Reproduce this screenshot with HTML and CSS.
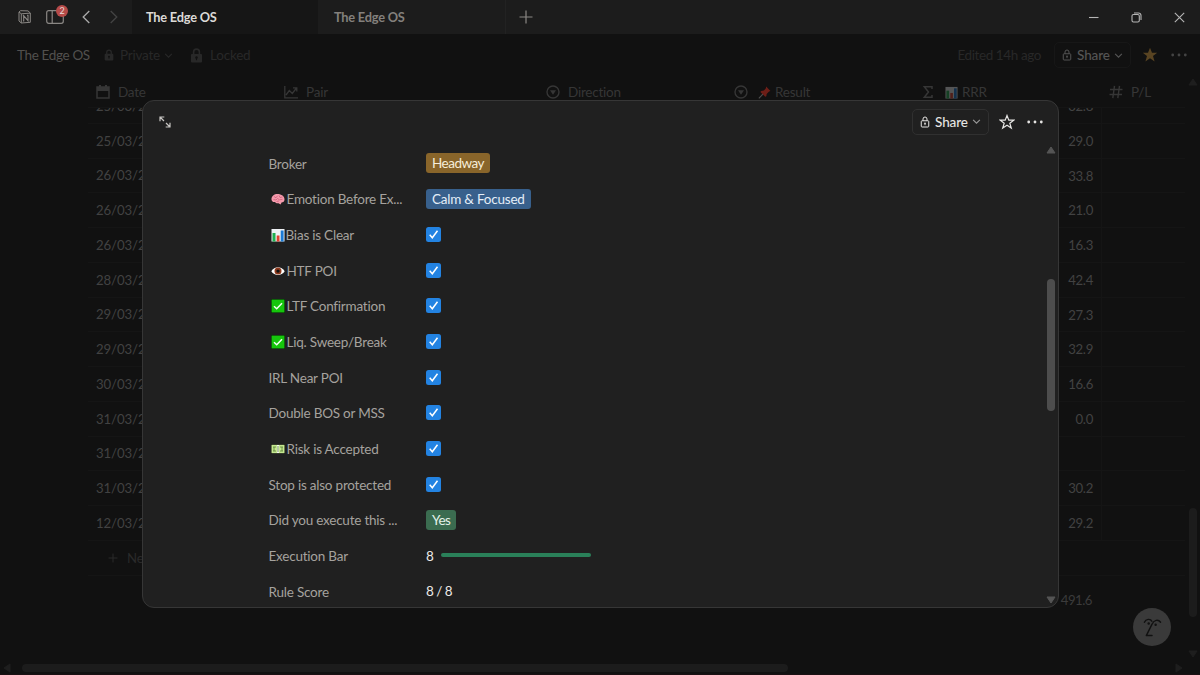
FILE: index.html
```
<!DOCTYPE html>
<html lang="en">

<head>
    <meta charset="UTF-8">
    <meta name="viewport" content="width=device-width, initial-scale=1.0">
    <title>The Edge OS</title>
    <link rel="stylesheet" href="styles.css">
</head>

<body>
    <!-- shared icons -->
    <svg class="defs" width="0" height="0">
        <symbol id="lock" viewBox="0 0 12 14">
            <rect x="1.5" y="5.5" width="9" height="7.5" rx="1" fill="none" stroke="currentColor" stroke-width="1.2" />
            <path d="M3.6 5.5V3.4a2.4 2.4 0 0 1 4.8 0v2.1M6 8.2v2.6" fill="none" stroke="currentColor" stroke-width="1.2" />
            <circle cx="6" cy="8.5" r="1" fill="currentColor" />
        </symbol>
        <symbol id="lock-fill" viewBox="0 0 12 14">
            <path fill="currentColor" fill-rule="evenodd" d="M1.8 5.6H10.2a1 1 0 0 1 1 1V12.5a1 1 0 0 1-1 1H1.8a1 1 0 0 1-1-1V6.6a1 1 0 0 1 1-1zM6 7.8a1.2 1.2 0 0 0-.5 2.3v1.3h1v-1.3A1.2 1.2 0 0 0 6 7.8z" />
            <path d="M3.3 6V3.7a2.7 2.7 0 0 1 5.4 0V6" fill="none" stroke="currentColor" stroke-width="1.5" />
        </symbol>
        <symbol id="down" viewBox="0 0 8 8">
            <path d="M1 2.5l3 3 3-3" fill="none" stroke="currentColor" />
        </symbol>
        <symbol id="dots" viewBox="0 0 16 4">
            <circle cx="1.7" cy="2" r="1.4" fill="currentColor" />
            <circle cx="8" cy="2" r="1.4" fill="currentColor" />
            <circle cx="14.3" cy="2" r="1.4" fill="currentColor" />
        </symbol>
        <symbol id="select" viewBox="0 0 14 14">
            <circle cx="7" cy="7" r="6" fill="none" stroke="currentColor" stroke-width="1.4" />
            <path d="M4 5.3h6L7 9.7z" fill="currentColor" />
        </symbol>
        <symbol id="chart" viewBox="0 0 14 14">
            <rect x=".5" y="1" width="13" height="12.5" fill="#eef1f4" />
            <rect x="1.5" y="5" width="3" height="8.5" fill="#1fae50" />
            <rect x="5.7" y="7.5" width="2.8" height="6" fill="#e0402f" />
            <rect x="9.7" y="2.5" width="2.9" height="11" fill="#1c7bd6" />
        </symbol>
        <symbol id="green-check" viewBox="0 0 14 14">
            <rect width="14" height="14" fill="#0b250b" />
            <rect x=".6" y=".6" width="12.8" height="12.8" fill="#16c60c" />
            <path d="M3 7.3l2.7 2.5L11 4.3" fill="none" stroke="#f4fff4" stroke-width="1.5" />
        </symbol>
        <symbol id="checked" viewBox="0 0 15 15">
            <rect width="15" height="15" rx="2.5" fill="#2383e2" />
            <path d="M3.7 7.8l2.6 2.9 5.2-7" fill="none" stroke="#fff" stroke-width="1.5" />
        </symbol>
        <symbol id="arrow" viewBox="0 0 10 8">
            <path d="M5 1L9 7H1z" fill="currentColor" stroke="currentColor" stroke-linejoin="round" />
        </symbol>
    </svg>

    <div class="app">
        <div class="titlebar">
            <div class="nav">
                <svg class="notion" viewBox="0 0 13 14">
                    <path d="M1 2l1.5-1.3 7.5.2L12.3 3v9.3l-9 .7L1 11zM1 2l2.3 1.8 9-.7M3.3 3.8v9.2" fill="none" stroke="currentColor" />
                    <path d="M5.7 11V5.7L10 10.7V5.2M4.8 5.7h1.4M9 5.2h1.5M4.9 11h1.3" fill="none" stroke="currentColor" stroke-width="1.1" />
                </svg>
                <div class="side">
                    <svg viewBox="0 0 18 14">
                        <rect x=".7" y=".7" width="16.6" height="12.6" rx="2" fill="none" stroke="currentColor" stroke-width="1.2" />
                        <path d="M6.2 1v12" stroke="currentColor" stroke-width="1.2" />
                    </svg>
                    <span class="badge">2</span>
                </div>
                <svg class="chev" viewBox="0 0 8 14"><path d="M7.3 1L1.2 7l6.1 6" fill="none" stroke="currentColor" stroke-width="1.3" /></svg>
                <svg class="chev dim" viewBox="0 0 8 14"><path d="M.7 1l6.1 6-6.1 6" fill="none" stroke="currentColor" stroke-width="1.3" /></svg>
            </div>
            <div class="tab active">The Edge OS</div>
            <div class="tab">The Edge OS</div>
            <svg class="plus" viewBox="0 0 14 14"><path d="M7 .5v13M.5 7h13" stroke="currentColor" stroke-width="1.2" /></svg>
            <div class="win">
                <svg viewBox="0 0 11 11"><path d="M1 5.5h9.5" stroke="currentColor" stroke-width="1.1" /></svg>
                <svg viewBox="0 0 11 11">
                    <rect x="1" y="2.5" width="7.3" height="7.5" rx="1.5" fill="none" stroke="currentColor" stroke-width="1.1" />
                    <path d="M3 1h4.5A2.5 2.5 0 0 1 10 3.5V8" fill="none" stroke="currentColor" stroke-width="1.1" />
                </svg>
                <svg viewBox="0 0 11 11"><path d="M.8.8l9.4 9.4M10.2.8L.8 10.2" stroke="currentColor" stroke-width="1.1" /></svg>
            </div>
        </div>

        <div class="topbar">
            <span class="crumb">The Edge OS</span>
            <svg class="i-lock"><use href="#lock-fill" /></svg>
            <span class="private">Private</span>
            <svg class="i-down"><use href="#down" /></svg>
            <svg class="i-lock big"><use href="#lock-fill" /></svg>
            <span class="locked">Locked</span>
            <span class="edited">Edited 14h ago</span>
            <div class="share">
                <svg class="i-lock"><use href="#lock" /></svg>
                <span>Share</span>
                <svg class="i-down"><use href="#down" /></svg>
            </div>
            <svg class="star gold" viewBox="0 0 16 16"><path d="M8 .8l2 5h5.2l-4.2 3.3 1.6 5.3L8 11.3l-4.6 3.1L5 9.1.8 5.8H6z" fill="currentColor" /></svg>
            <svg class="i-dots"><use href="#dots" /></svg>
        </div>

        <div class="thead">
            <div>
                <svg viewBox="0 0 14 14"><path d="M1 2h12v11H1z" fill="none" stroke="currentColor" stroke-width="1.5" /><path d="M1 2h12v4H1zM3 0h2v3H3zM9 0h2v3H9z" fill="currentColor" /></svg>
                <span>Date</span>
            </div>
            <div>
                <svg viewBox="0 0 14 14"><path d="M.8 1v11.8H14M2 10l3.3-4.5 3 3L12.5 3M9 2.8h3.8v3.7" fill="none" stroke="currentColor" stroke-width="1.3" /></svg>
                <span>Pair</span>
            </div>
            <div><svg><use href="#select" /></svg><span>Direction</span></div>
            <div>
                <svg><use href="#select" /></svg>
                <svg class="emoji" viewBox="0 0 12 12"><path d="M7.5.5l4 4-1.3.5-2.2 2.3-.3 2.2-1 .5-4.5-4.5.8-1 2.5-.4L7.3 2z" fill="#dd2e20" /><path d="M4.5 7.5L.8 11.5" stroke="#999" /></svg>
                <span>Result</span>
            </div>
            <div>
                <svg viewBox="0 0 14 14"><path d="M11 4V1.7H3.3L7.5 7l-4.2 5.3H11V10" fill="none" stroke="currentColor" stroke-width="1.5" /></svg>
                <svg class="emoji"><use href="#chart" /></svg>
                <span>RRR</span>
            </div>
            <div>
                <svg viewBox="0 0 14 14"><path d="M5.5.8L3.8 13.2M10.5.8L8.8 13.2M1 4.5h12.5M.5 9.5H13" stroke="currentColor" stroke-width="1.4" /></svg>
                <span>P/L</span>
            </div>
        </div>

        <div class="tbody">
            <div class="row"><span>25/03/2026</span><b>32.8</b></div>
            <div class="row"><span>25/03/2026</span><b>29.0</b></div>
            <div class="row"><span>26/03/2026</span><b>33.8</b></div>
            <div class="row"><span>26/03/2026</span><b>21.0</b></div>
            <div class="row"><span>26/03/2026</span><b>16.3</b></div>
            <div class="row"><span>28/03/2026</span><b>42.4</b></div>
            <div class="row"><span>29/03/2026</span><b>27.3</b></div>
            <div class="row"><span>29/03/2026</span><b>32.9</b></div>
            <div class="row"><span>30/03/2026</span><b>16.6</b></div>
            <div class="row"><span>31/03/2026</span><b>0.0</b></div>
            <div class="row"><span>31/03/2026</span><b></b></div>
            <div class="row"><span>31/03/2026</span><b>30.2</b></div>
            <div class="row"><span>12/03/2026</span><b>29.2</b></div>
            <div class="row new">
                <svg viewBox="0 0 10 10"><path d="M5 .5v9M.5 5h9" stroke="currentColor" /></svg>
                <span>New page</span>
            </div>
            <div class="sum">491.6</div>
        </div>

        <div class="hscroll">
            <svg class="tri left"><use href="#arrow" /></svg>
            <div class="thumb"></div>
            <svg class="tri right"><use href="#arrow" /></svg>
        </div>

        <div class="vscroll">
            <svg class="tri"><use href="#arrow" /></svg>
            <div class="thumb"></div>
            <svg class="tri down"><use href="#arrow" /></svg>
        </div>

        <div class="face">
            <svg viewBox="0 0 20 22">
                <path d="M1.5 5.5C3 1.8 8 1.5 9.3 4.5M18.5 5.5C16 2 11.5 3 9.5 7.5L3.5 19.5H9.5" fill="none" stroke="#111" stroke-width="1.5" stroke-linecap="round" stroke-linejoin="round" />
                <circle cx="6" cy="6.7" r="1.3" fill="#111" />
                <circle cx="13.3" cy="8" r="1.3" fill="#111" />
            </svg>
        </div>

        <div class="modal">
            <div class="modal-head">
                <svg class="expand" viewBox="0 0 12 12"><path d="M1 5.3V1h4.3M1 1l4 4M7 7l4 4M11 6.7V11H6.7" fill="none" stroke="currentColor" stroke-width="1.2" /></svg>
                <div class="share">
                    <svg class="i-lock"><use href="#lock" /></svg>
                    <span>Share</span>
                    <svg class="i-down"><use href="#down" /></svg>
                </div>
                <svg class="star" viewBox="0 0 16 16"><path d="M8 1.5l1.8 4.7h4.9l-3.9 3 1.5 4.9L8 11.2l-4.3 2.9 1.5-4.9-3.9-3h4.9z" fill="none" stroke="currentColor" stroke-width="1.2" /></svg>
                <svg class="i-dots"><use href="#dots" /></svg>
            </div>
            <div class="modal-body">
                <div class="props">
                    <div class="prop"><div class="label">Broker</div><span class="tag yellow">Headway</span></div>
                    <div class="prop">
                        <div class="label">
                            <svg class="emoji" viewBox="0 0 14 14">
                                <path d="M.5 7.5C.3 4 3.3 2 6.5 2c4 0 7 2.3 7 5.5 0 2-1.3 2.8-2.7 2.8L9.5 12.5l-2-1.3C6 11.7 4.7 11 4 10 2 10.4.6 9.3.5 7.5z" fill="#f49aac" />
                                <path d="M3 4.5l2 1.3 1.5-2M8 3.5l1 2 2.5-.5M2.5 7.5l2.5.5 1.5-1.5 2 1.3 3-.5M5.5 9.5l2.5-.5" fill="none" stroke="#c95873" stroke-width=".7" />
                            </svg>Emotion Before Ex...
                        </div>
                        <span class="tag blue">Calm &amp; Focused</span>
                    </div>
                    <div class="prop"><div class="label tight"><svg class="emoji"><use href="#chart" /></svg>Bias is Clear</div><svg class="check"><use href="#checked" /></svg></div>
                    <div class="prop">
                        <div class="label">
                            <svg class="emoji" viewBox="0 0 14 14">
                                <path d="M.3 7.3C3.5 2 10.5 2 13.7 7.3 10.5 12.3 3.5 12.3.3 7.3z" fill="#fff" />
                                <circle cx="7" cy="7.1" r="3.5" fill="#8e3a1d" />
                                <circle cx="7" cy="7.1" r="1.7" fill="#111" />
                            </svg>HTF POI
                        </div>
                        <svg class="check"><use href="#checked" /></svg>
                    </div>
                    <div class="prop"><div class="label"><svg class="emoji"><use href="#green-check" /></svg>LTF Confirmation</div><svg class="check"><use href="#checked" /></svg></div>
                    <div class="prop"><div class="label"><svg class="emoji"><use href="#green-check" /></svg>Liq. Sweep/Break</div><svg class="check"><use href="#checked" /></svg></div>
                    <div class="prop"><div class="label">IRL Near POI</div><svg class="check"><use href="#checked" /></svg></div>
                    <div class="prop"><div class="label">Double BOS or MSS</div><svg class="check"><use href="#checked" /></svg></div>
                    <div class="prop">
                        <div class="label">
                            <svg class="emoji" viewBox="0 0 14 14">
                                <rect y="2" width="14" height="10" fill="#111" />
                                <rect x=".5" y="2.8" width="13" height="8.4" fill="#c5e890" />
                                <path d="M6 3h2v8H6z" fill="#f5f7ee" />
                                <path d="M2 5h3M3 5v4M2 9h3M9 5h3M11 5v4M9 9h3M7 4v6" stroke="#557c35" stroke-width=".8" />
                            </svg>Risk is Accepted
                        </div>
                        <svg class="check"><use href="#checked" /></svg>
                    </div>
                    <div class="prop"><div class="label">Stop is also protected</div><svg class="check"><use href="#checked" /></svg></div>
                    <div class="prop"><div class="label">Did you execute this ...</div><span class="tag green">Yes</span></div>
                    <div class="prop"><div class="label">Execution Bar</div><span class="value">8</span><div class="bar"></div></div>
                    <div class="prop"><div class="label">Rule Score</div><span class="value">8 / 8</span></div>
                </div>
                <div class="modal-scroll">
                    <svg class="tri"><use href="#arrow" /></svg>
                    <div class="thumb"></div>
                    <svg class="tri down"><use href="#arrow" /></svg>
                </div>
            </div>
        </div>
    </div>
</body>

</html>
```
FILE: styles.css
```
* {
    box-sizing: border-box;
}

html,
body {
    margin: 0;
    height: 100%;
    overflow: hidden;
    background: #111;
}

body {
    font-family: Lato, "Noto Sans", sans-serif;
    font-size: 13.5px;
    letter-spacing: -.22px;
    color: #3b3b3b;
}

svg {
    display: block;
    flex: none;
}

.defs {
    position: absolute;
}

.app {
    position: relative;
    width: 1200px;
    height: 675px;
    display: flex;
    flex-direction: column;
    border-bottom: 1px solid #1b1013;
}

/* title bar */
.titlebar {
    display: flex;
    align-items: center;
    height: 34px;
    flex: none;
    background: #1c1c1c;
    color: #8a8784;
}

.nav {
    display: flex;
    align-items: center;
    width: 132px;
    padding-left: 18px;
}

.notion {
    width: 13px;
    height: 14px;
}

.side {
    position: relative;
    margin: 0 18px 0 15px;
}

.side svg {
    width: 18px;
    height: 14px;
}

.badge {
    position: absolute;
    left: 10px;
    top: -5px;
    width: 12px;
    height: 12px;
    border-radius: 50%;
    background: #b64b49;
    color: #e6dcdb;
    font-size: 9px;
    line-height: 12px;
    text-align: center;
}

.chev {
    width: 8px;
    height: 14px;
    color: #aaa;
    margin-right: 20px;
}

.chev.dim {
    color: #444;
    margin: 0;
}

.tab {
    width: 187px;
    height: 34px;
    line-height: 35px;
    padding-left: 15px;
    border-right: 1px solid #222;
    color: #83807c;
    font-size: 12.8px;
    font-weight: 700;
}

.tab.active {
    padding-left: 14px;
    background: #161616;
    color: #dcdad7;
    border-right-color: #1c1c1c;
}

.plus {
    width: 14px;
    height: 14px;
    margin-left: 13px;
    color: #8a8784;
}

.win {
    display: flex;
    gap: 32px;
    margin-left: auto;
    padding-right: 15px;
    color: #b5b5b5;
}

.win svg {
    width: 11px;
    height: 11px;
}

/* page bar */
.topbar {
    display: flex;
    align-items: center;
    height: 42px;
    flex: none;
    padding: 0 13px 0 17px;
    color: #282828;
}

.crumb {
    width: 87px;
    letter-spacing: -.35px;
    color: #52504e;
}

.i-lock {
    width: 10px;
    height: 12px;
}

.i-lock.big {
    width: 13px;
    height: 15px;
}

.topbar .i-lock.big {
    margin: 0 7px 0 17px;
}

.i-down {
    width: 9px;
    height: 9px;
}

.private {
    width: 40px;
    margin: 0 4px 0 6px;
}

.edited {
    margin-left: auto;
    letter-spacing: -.4px;
}

.share {
    display: flex;
    align-items: center;
    width: 77px;
    height: 26px;
    padding-left: 7px;
    border: 1px solid #171717;
    border-radius: 5px;
}

.share span {
    width: 33px;
    margin: 0 4px 0 5px;
    font-weight: 500;
    letter-spacing: -.1px;
}

.topbar .share {
    margin-left: 13px;
    color: #555;
}

.star {
    width: 16px;
    height: 16px;
}

.gold {
    color: #594422;
    margin: 0 13px 0 11px;
}

.i-dots {
    width: 16px;
    height: 4px;
}

.topbar .i-dots {
    color: #444;
}

/* table */
.thead {
    display: grid;
    grid-template-columns: 188px 262px 188px 187px 188px 91px;
    align-items: center;
    height: 32px;
    margin-bottom: -1px;
    flex: none;
    padding-left: 96px;
    color: #363636;
}

.thead div {
    display: flex;
    align-items: center;
    gap: 8px;
}

.thead svg {
    width: 14px;
    height: 14px;
}

.thead .emoji {
    width: 13px;
    height: 13px;
    margin: 0 -4px 0 2px;
    opacity: .3;
}

.thead div:nth-child(4) .emoji {
    opacity: .45;
}

.tbody {
    height: 553px;
    flex: none;
    overflow: hidden;
    margin: 0 15px 0 88px;
    border-top: 1px solid #151515;
}

.row {
    display: flex;
    align-items: center;
    height: 34.75px;
    padding-left: 8px;
    border-bottom: 1px solid #151515;
    font-size: 13.2px;
    color: #424242;
}

.row:first-child {
    margin-top: -19px;
}

.row span {
    width: 860px;
    letter-spacing: -.1px;
}

.row b {
    width: 146px;
    height: 100%;
    padding-right: 8px;
    line-height: 35px;
    border-right: 1px solid #151515;
    text-align: right;
    font-weight: 400;
    letter-spacing: -.3px;
}

.row.new {
    padding-left: 20px;
    gap: 9px;
    color: #2a2a2a;
}

.row.new svg {
    width: 10px;
    height: 10px;
}

.sum {
    width: 1004px;
    padding-top: 16px;
    text-align: right;
    font-size: 13.2px;
    letter-spacing: -.5px;
    color: #3b3b3b;
}

.thumb {
    border-radius: 4px;
    background: #1c1c1c;
}

.tri {
    width: 10px;
    height: 8px;
    color: #1e1e1e;
}

.tri.down {
    transform: rotate(180deg);
}

.tri.left {
    transform: rotate(-90deg);
}

.tri.right {
    transform: rotate(90deg);
}

.hscroll {
    display: flex;
    align-items: center;
    height: 14px;
    padding: 2px 16px 0 2px;
}

.hscroll .thumb {
    width: 766px;
    height: 8px;
    margin: 0 auto 0 10px;
}

.vscroll {
    position: absolute;
    right: 2px;
    top: 78px;
    height: 580px;
    display: flex;
    flex-direction: column;
    align-items: center;
}

.vscroll .thumb {
    width: 8px;
    height: 109px;
    margin: auto 0 33px;
}

.face {
    position: absolute;
    left: 1133px;
    top: 608px;
    width: 38px;
    height: 38px;
    border-radius: 50%;
    background: #3a3a3a;
    display: flex;
    align-items: center;
    justify-content: center;
}

.face svg {
    width: 19px;
    height: 21px;
}

/* peek window */
.modal {
    position: absolute;
    left: 142px;
    top: 100px;
    width: 917px;
    height: 508px;
    border: 1px solid #363636;
    border-radius: 12px;
    background: #202020;
    overflow: hidden;
}

.modal-head {
    display: flex;
    align-items: center;
    height: 43px;
    padding: 0 15px 2px 16px;
    color: #e6e5e3;
}

.expand {
    width: 12px;
    height: 12px;
    color: #c8c6c3;
}

.modal-head .share {
    margin-left: auto;
    margin-right: 10px;
    border-color: #303030;
}

.modal-head .share .i-down {
    color: #999;
}

.modal-head .i-dots {
    margin-left: 12px;
}

.modal-body {
    display: flex;
    justify-content: space-between;
    height: 464px;
}

.props {
    padding: 1.5px 0 0 125.5px;
}

.prop {
    display: flex;
    align-items: center;
    height: 35.67px;
    color: #eceae7;
}

.label {
    display: flex;
    align-items: center;
    width: 157.5px;
    padding-top: 1px;
    color: #a5a29e;
    white-space: nowrap;
}

.label .emoji {
    width: 14px;
    height: 14px;
    margin: 0 2px;
}

.label.tight .emoji {
    margin-right: 1px;
}

.tag {
    height: 20px;
    padding: 0 6px;
    line-height: 21px;
    border-radius: 3px;
}

.yellow {
    background: #89652a;
    color: #f6edd9;
    letter-spacing: -.5px;
}

.blue {
    background: #38608c;
    color: #e4eef8;
}

.green {
    background: #3b6c50;
    color: #e4f2e9;
    letter-spacing: -.5px;
}

.check {
    width: 15px;
    height: 15px;
}

.value {
    letter-spacing: -.5px;
}

.bar {
    width: 150px;
    height: 4px;
    margin: -2px 0 0 8px;
    border-radius: 2px;
    background: #2a8059;
}

.modal-scroll {
    display: flex;
    flex-direction: column;
    align-items: center;
    width: 10px;
    height: 458px;
    margin: 2px 2px 0 0;
}

.modal-scroll .tri {
    color: #555;
}

.modal-scroll .thumb {
    width: 8px;
    height: 132px;
    margin: 125px 0 auto;
    background: #4d4d4d;
}
```
